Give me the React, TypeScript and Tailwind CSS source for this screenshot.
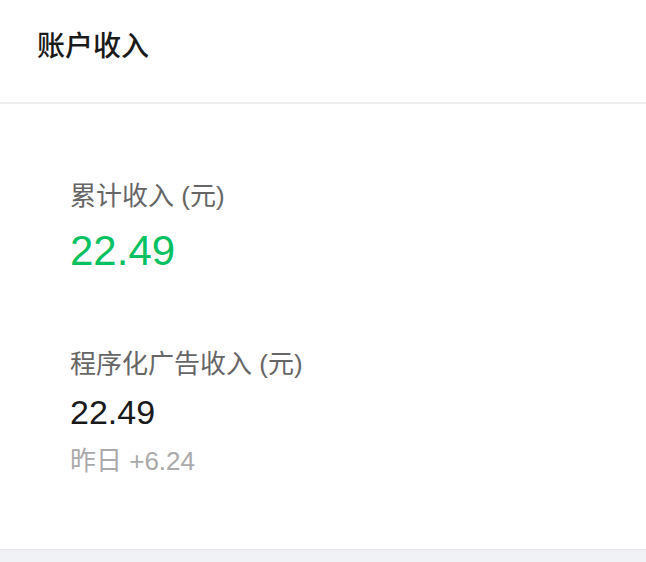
import React from "react";

export default function App() {
  return (
    <div
      className="w-[646px] h-[562px] bg-[#f1f2f5] overflow-hidden"
      style={{ fontFamily: '"Liberation Sans", "Noto Sans CJK SC", sans-serif' }}
    >
      <div className="bg-white border-b border-[#e4e4e4]">
        <div className="h-[104px] pt-[29px] px-[37px] border-b-2 border-[#efefef]">
          <div className="text-[28px] leading-[36px] font-medium text-[#1a1a1a]">账户收入</div>
        </div>
        <div className="px-[70px] pt-[74px] pb-[70px] flex flex-col">
          <div className="text-[26px] leading-[36px] text-[#666666]">累计收入 (元)</div>
          <div className="text-[42px] leading-[52px] mt-[11px] text-[#07c160]">22.49</div>
          <div className="text-[26px] leading-[36px] text-[#666666] mt-[69px]">程序化广告收入 (元)</div>
          <div className="text-[34px] leading-[44px] mt-[8px] text-[#1a1a1a]">22.49</div>
          <div className="text-[26px] leading-[36px] mt-[9px] text-[#aaaaaa]">昨日 +6.24</div>
        </div>
      </div>
    </div>
  );
}
